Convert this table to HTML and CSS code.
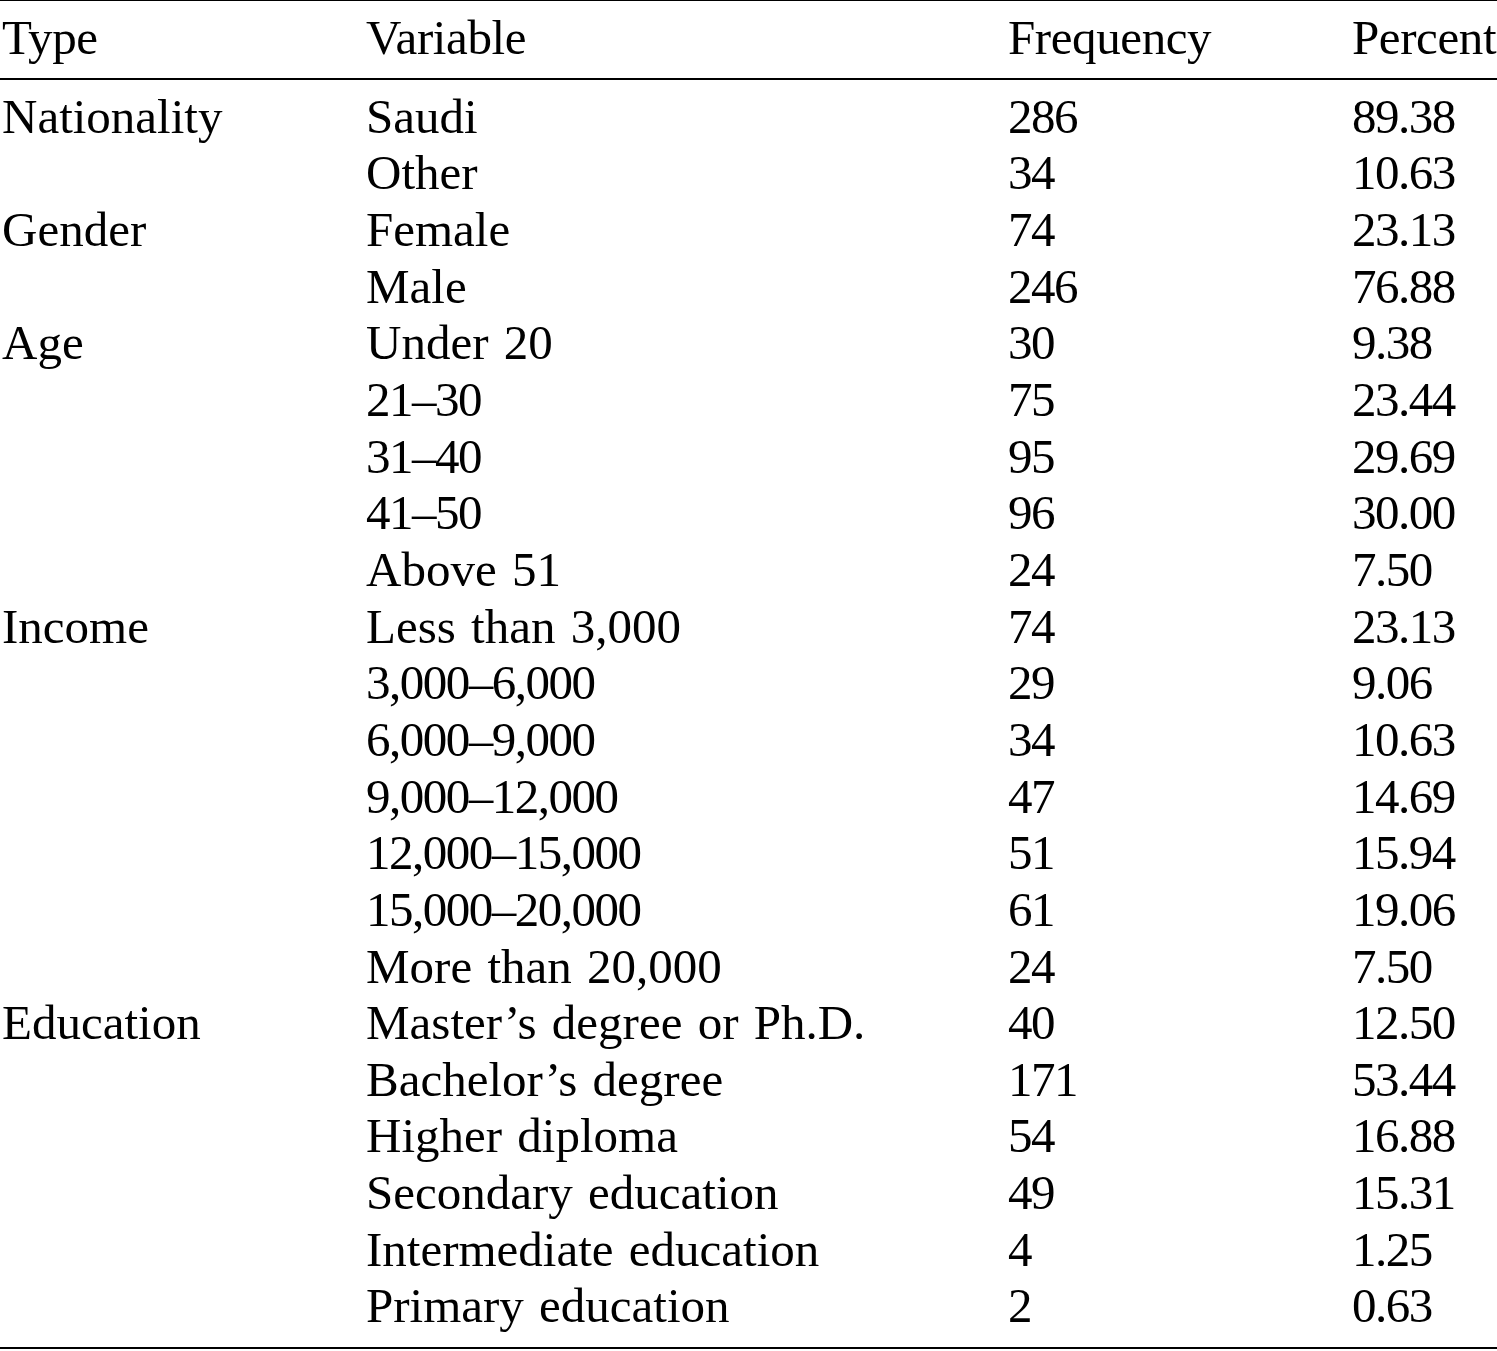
FILE: index.html
```html
<!DOCTYPE html>
<html lang="en">
<head>
<meta charset="utf-8">
<title>Table</title>
<link rel="stylesheet" href="styles.css">
</head>
<body>
<div class="table">
  <div class="head">
    <div class="c1">Type</div><div class="c2">Variable</div><div class="c3">Frequency</div><div class="c4">Percent</div>
  </div>
  <div class="body">
    <div class="c1">Nationality</div><div class="c2">Saudi</div><div class="c3">286</div><div class="c4">89.38</div>
    <div class="c1"></div><div class="c2">Other</div><div class="c3">34</div><div class="c4">10.63</div>
    <div class="c1">Gender</div><div class="c2">Female</div><div class="c3">74</div><div class="c4">23.13</div>
    <div class="c1"></div><div class="c2">Male</div><div class="c3">246</div><div class="c4">76.88</div>
    <div class="c1">Age</div><div class="c2">Under 20</div><div class="c3">30</div><div class="c4">9.38</div>
    <div class="c1"></div><div class="c2 num">21–30</div><div class="c3">75</div><div class="c4">23.44</div>
    <div class="c1"></div><div class="c2 num">31–40</div><div class="c3">95</div><div class="c4">29.69</div>
    <div class="c1"></div><div class="c2 num">41–50</div><div class="c3">96</div><div class="c4">30.00</div>
    <div class="c1"></div><div class="c2">Above 51</div><div class="c3">24</div><div class="c4">7.50</div>
    <div class="c1">Income</div><div class="c2">Less than 3,000</div><div class="c3">74</div><div class="c4">23.13</div>
    <div class="c1"></div><div class="c2 num">3,000–6,000</div><div class="c3">29</div><div class="c4">9.06</div>
    <div class="c1"></div><div class="c2 num">6,000–9,000</div><div class="c3">34</div><div class="c4">10.63</div>
    <div class="c1"></div><div class="c2 num">9,000–12,000</div><div class="c3">47</div><div class="c4">14.69</div>
    <div class="c1"></div><div class="c2 num">12,000–15,000</div><div class="c3">51</div><div class="c4">15.94</div>
    <div class="c1"></div><div class="c2 num">15,000–20,000</div><div class="c3">61</div><div class="c4">19.06</div>
    <div class="c1"></div><div class="c2">More than 20,000</div><div class="c3">24</div><div class="c4">7.50</div>
    <div class="c1">Education</div><div class="c2">Master’s degree or Ph.D.</div><div class="c3">40</div><div class="c4">12.50</div>
    <div class="c1"></div><div class="c2">Bachelor’s degree</div><div class="c3">171</div><div class="c4">53.44</div>
    <div class="c1"></div><div class="c2">Higher diploma</div><div class="c3">54</div><div class="c4">16.88</div>
    <div class="c1"></div><div class="c2">Secondary education</div><div class="c3">49</div><div class="c4">15.31</div>
    <div class="c1"></div><div class="c2">Intermediate education</div><div class="c3">4</div><div class="c4">1.25</div>
    <div class="c1"></div><div class="c2">Primary education</div><div class="c3">2</div><div class="c4">0.63</div>
  </div>
</div>
</body>
</html>
```
FILE: styles.css
```css
html, body {
  margin: 0;
  padding: 0;
  background: #fff;
}
.table {
  width: 1497px;
  font-family: "Liberation Serif", "Times New Roman", serif;
  font-size: 49px;
  line-height: 56.67px;
  color: #000;
  word-spacing: 3px;
  border-top: 1px solid #000;
  border-bottom: 2px solid #000;
  white-space: nowrap;
}
.head, .body {
  display: grid;
  grid-template-columns: 364px 642px 344px 1fr;
  padding-left: 2px;
}
.head {
  padding-top: 9px;
  padding-bottom: 11px;
  border-bottom: 2px solid #000;
  letter-spacing: -0.4px;
}
.body {
  padding-top: 9px;
  padding-bottom: 12px;
  grid-auto-rows: 56.67px;
}
.body .c3, .body .c4, .body .num {
  letter-spacing: -1.5px;
}
```
